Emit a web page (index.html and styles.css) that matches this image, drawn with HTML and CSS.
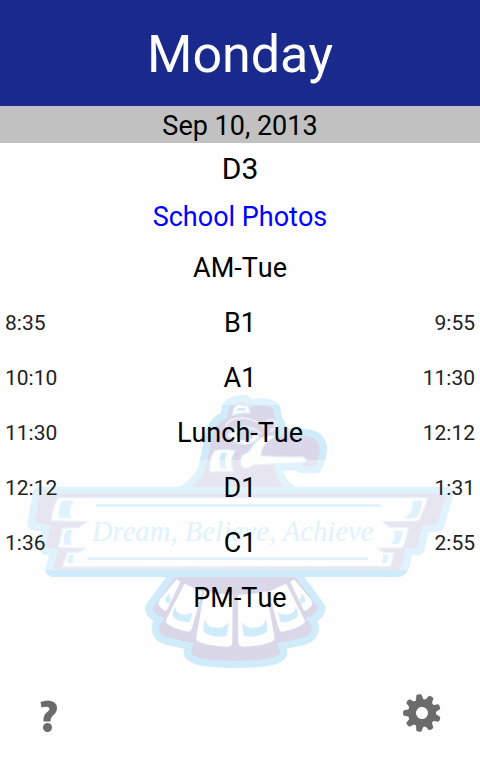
FILE: index.html
```html
<!DOCTYPE html>
<html lang="en">
<head>
<meta charset="utf-8">
<meta name="viewport" content="width=device-width, initial-scale=1">
<title>Monday</title>
<link rel="stylesheet" href="styles.css">
</head>
<body>

<!-- school crest behind the schedule -->
<svg class="crest" viewBox="0 240 1440 900" aria-hidden="true">
  <defs>
    <g id="feathers">
      <path class="white" d="M530 838 L541 846 L501 930 Q495 938 475 914 Q474 908 480 898 Z"/>
      <path class="white" d="M554 850 L607 876 L576 984 Q572 1000 556 993 Q522 988 500 970 Q495 966 500 956 Z"/>
      <path class="white" d="M613 874 Q655 884 698 884 L697 1026 Q697 1040 682 1040 Q636 1040 600 1027 Q586 1022 589 1010 Z"/>
      <path class="cyan" d="M510 879 Q495 888 497 906 L508 912 L514 897 Q504 896 510 879 Z"/>
      <path class="cyan" d="M525 920 Q512 945 524 955 Q547 969 570 966 L578 936 Q562 950 541 941 Q527 936 525 920 Z"/>
      <path class="cyan" d="M615 957 Q606 982 613 997 Q642 1016 681 1007 L686 965 Q678 984 650 983 Q620 984 615 957 Z"/>
    </g>
  </defs>

  <!-- tail -->
  <path class="purple edge" d="M530 825 L457 925 Q460 944 495 955 L477 978 Q474 1004 500 1012 L580 1030 L573 1055 Q573 1082 706 1082 Q840 1082 840 1055 L832 1030 L912 1012 Q938 1004 935 978 L917 955 Q952 944 955 925 L882 825 Z"/>
  <use href="#feathers"/>
  <use href="#feathers" transform="translate(1412 0) scale(-1 1)"/>
  <path class="purple" d="M520 815 L895 815 L862 850 Q790 884 706 880 Q622 884 550 850 Z"/>

  <!-- head and beak -->
  <path class="purple edge" d="M530 590 Q600 555 618 500 Q630 440 640 395 Q648 368 682 353 L687 325 Q697 306 730 306 L752 322 Q790 310 818 325 L826 362 Q842 382 838 408 Q875 405 912 408 Q955 411 960 445 Q958 470 946 498 L907 498 Q917 480 895 488 L822 492 Q826 555 890 590 Z"/>
  <path class="white glow" d="M698 344 Q702 316 718 316 L744 320 L748 338 Q720 336 698 344 Z"/>
  <path class="cyan" d="M709 334 L715 324 L736 323 L737 331 Z"/>
  <path class="line" d="M677 380 Q685 352 730 354 Q777 359 802 392 M690 397 Q735 363 784 401"/>
  <path class="white glow" d="M685 405 Q735 370 775 411 Q742 446 700 420 Z"/>
  <ellipse class="purple" cx="735" cy="403" rx="27" ry="19"/>
  <path class="line" d="M798 365 Q817 350 828 369 Q830 390 810 392"/>
  <path class="white glow" d="M644 454 Q664 447 704 452 Q684 484 698 513 Q662 511 631 514 Q628 482 644 454 Z"/>
  <path class="cyan" d="M664 459 L682 459 Q669 485 679 506 L662 505 Q653 482 664 459 Z"/>
  <path class="white glow" d="M824 408 Q775 408 759 441 Q749 459 728 467 Q716 486 730 501 Q746 505 758 493 L912 486 Q923 478 907 472 Q845 473 782 469 Q781 443 799 425 Z"/>

  <!-- banner -->
  <path class="purple edge" d="M120 582 L104 670 L150 676 L138 742 L175 748 L158 809 L1194 809 Q1210 809 1216 745 L1253 743 L1268 678 L1312 672 L1338 582 Z"/>
  <path class="white glow" d="M176 595 L1282 595 L1260 652 Q1255 662 1243 662 L1142 663 L1168 684 L1224 684 L1211 733 Q1209 742 1196 742 L1126 743 L1152 759 L1180 760 L1170 797 L190 799 L204 759 L236 758 L262 743 L177 741 L189 686 L237 684 L265 663 L156 661 Q159 620 176 595 Z"/>
  <path class="cyan" d="M187 602 L222 602 Q202 627 215 655 L178 655 Q170 628 187 602 Z"/>
  <path class="cyan" d="M200 690 L217 690 Q206 710 216 734 L193 734 Q187 710 200 690 Z"/>
  <path class="cyan" d="M209 764 L223 764 Q213 778 222 790 L205 790 Q199 776 209 764 Z"/>
  <path class="cyan" d="M1236 602 L1267 602 Q1264 638 1247 655 L1212 655 Q1243 637 1236 602 Z"/>
  <path class="cyan" d="M1181 692 L1208 692 Q1205 721 1195 733 L1173 733 Q1189 713 1181 692 Z"/>
  <path class="cyan" d="M1149 763 L1166 764 Q1165 782 1158 790 L1143 790 Q1152 778 1149 763 Z"/>
  <path class="rule" d="M288 617 H1142 M263 776 H1104"/>
  <text class="motto" x="698" y="724" text-anchor="middle">Dream, Believe, Achieve</text>
</svg>

<header>
  <h1>Monday</h1>
  <p class="date">Sep 10, 2013</p>
</header>

<main>
  <p class="day">D3</p>
  <p class="event"><a href="#">School Photos</a></p>

  <table class="schedule">
    <tr><td></td><th>AM-Tue</th><td></td></tr>
    <tr class="block"><td>8:35</td><th>B1</th><td>9:55</td></tr>
    <tr class="block"><td>10:10</td><th>A1</th><td>11:30</td></tr>
    <tr><td>11:30</td><th>Lunch-Tue</th><td>12:12</td></tr>
    <tr class="block"><td>12:12</td><th>D1</th><td>1:31</td></tr>
    <tr class="block"><td>1:36</td><th>C1</th><td>2:55</td></tr>
    <tr><td></td><th>PM-Tue</th><td></td></tr>
  </table>
</main>

<footer>
  <button type="button" aria-label="Help">
    <svg width="40" height="40" viewBox="0 0 40 40">
      <path d="M12.500 9 Q16 7.500 20 7.500 Q29 8 29 15 Q29 19 25.500 22 Q22.500 24.500 22.500 28.500 H15.500 Q15 23 18 20 Q21.500 17.500 21.500 15.500 Q21 12.500 13.500 14.500 Z"/>
      <circle cx="19.500" cy="34.500" r="4.500"/>
    </svg>
  </button>
  <button type="button" aria-label="Settings">
    <svg width="40" height="40" viewBox="0 0 40 40">
      <g transform="rotate(-10 20 20)">
        <path fill-rule="evenodd" d="M20 6 A14 14 0 1 1 20 34 A14 14 0 1 1 20 6 Z M20 14 A6 6 0 1 0 20 26 A6 6 0 1 0 20 14 Z"/>
        <path id="tooth" d="M16 8 L17.500 1.500 Q20 .5 22.500 1.500 L24 8 Z"/>
        <use href="#tooth" transform="rotate(40 20 20)"/>
        <use href="#tooth" transform="rotate(80 20 20)"/>
        <use href="#tooth" transform="rotate(120 20 20)"/>
        <use href="#tooth" transform="rotate(160 20 20)"/>
        <use href="#tooth" transform="rotate(200 20 20)"/>
        <use href="#tooth" transform="rotate(240 20 20)"/>
        <use href="#tooth" transform="rotate(280 20 20)"/>
        <use href="#tooth" transform="rotate(320 20 20)"/>
      </g>
    </svg>
  </button>
</footer>

</body>
</html>
```
FILE: styles.css
```css
* {
  box-sizing: border-box;
}

body {
  position: relative;
  z-index: 0;
  display: flex;
  flex-direction: column;
  min-height: 100vh;
  margin: 0;
  background-color: #fefefe;
  color: #000;
  font-family: Roboto, "Liberation Sans", sans-serif;
  font-kerning: none;
  text-align: center;
}

h1, p {
  margin: 0;
  font-weight: normal;
}

h1 {
  padding-top: 4px;
  background-color: #1a298c;
  color: #fff;
  font-size: 52px;
  line-height: 102px;
}

.date {
  padding-top: 3px;
  background-color: #c1c1c1;
  font-size: 27px;
  line-height: 34px;
}

.day {
  font-size: 30px;
  line-height: 52px;
}

.event {
  font-size: 27px;
  line-height: 45px;
}

.event a {
  color: #00f;
  text-decoration: none;
}

/* Schedule: start time, block, end time */
.schedule {
  width: 100%;
  table-layout: fixed;
  border-collapse: collapse;
}

.schedule tr {
  height: 55px;
}

/* class blocks fade the crest a bit more */
.schedule .block {
  background-color: rgba(254, 254, 254, 0.35);
}

.schedule th {
  width: 50%;
  padding: 0;
  font-size: 27px;
  font-weight: normal;
}

.schedule td {
  padding: 0 5px;
  color: #222;
  font-size: 21px;
  text-align: left;
}

.schedule td:last-child {
  text-align: right;
}

footer {
  display: flex;
  justify-content: space-between;
  margin-top: auto;
  padding: 0 38px 27px 28px;
}

footer button {
  padding: 0;
  border: 0;
  background: none;
  cursor: pointer;
}

footer svg {
  display: block;
  fill: #6b6b6b;
}

/* Crest */
.crest {
  position: absolute;
  z-index: -1;
  bottom: 80px;
  left: 0;
  width: 100%;
}

.purple {
  fill: #d9d7e8;
}

.edge {
  stroke: #d0ecfb;
  stroke-width: 44px;
  stroke-linejoin: round;
  paint-order: stroke;
}

.white {
  fill: #fefefe;
}

.glow {
  stroke: #dcebf8;
  stroke-width: 8px;
  stroke-linejoin: round;
  paint-order: stroke;
}

.cyan {
  fill: #d0ecfb;
}

.line {
  fill: none;
  stroke: #eceef8;
  stroke-width: 6px;
}

.rule {
  stroke: #d0ecfb;
  stroke-width: 8px;
}

.motto {
  fill: #d0ecfb;
  font: italic 86px "Liberation Serif", serif;
}
```
